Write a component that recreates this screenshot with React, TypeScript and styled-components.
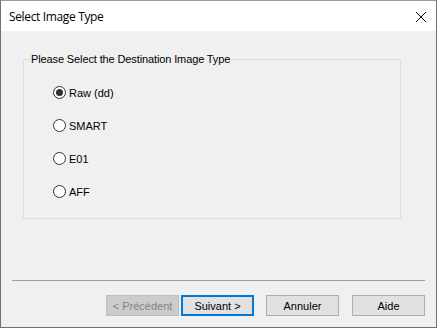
import React from "react";
import styled, { createGlobalStyle } from "styled-components";

const Global = createGlobalStyle`
  html, body { margin: 0; padding: 0; background: #f0f0f0; }
  * { box-sizing: border-box; }
`;

const Window = styled.div`
  width: 437px;
  height: 328px;
  border: 1px solid #6f6f6f;
  border-top-color: #9a9a9a;
  display: flex;
  flex-direction: column;
  background: #f0f0f0;
  font-family: "Liberation Sans", Arial, sans-serif;
  font-size: 11px;
  color: #000;
`;

const TitleBar = styled.div`
  height: 30px;
  background: #ffffff;
  display: flex;
  align-items: center;
  justify-content: space-between;
  padding: 0 9px 0 8px;
  flex-shrink: 0;
`;

const Title = styled.span`
  font-family: "Open Sans", "Noto Sans", sans-serif;
  font-size: 12px;
  color: #000;
  letter-spacing: -0.35px;
  padding-top: 1px;
`;

const CloseIcon = styled.svg`
  width: 12px;
  height: 12px;
  margin-top: 1px;
`;

const Body = styled.div`
  flex: 1;
  display: flex;
  flex-direction: column;
`;

const GroupBox = styled.div`
  position: relative;
  margin: 28px 0 0 22px;
  width: 378px;
  height: 160px;
  border: 1px solid #dcdcdc;
  padding: 16px 0 0 29px;
  display: flex;
  flex-direction: column;
`;

const Legend = styled.span`
  position: absolute;
  top: -8px;
  left: 6px;
  padding: 0 2px 0 1px;
  background: #f0f0f0;
  line-height: 14px;
  letter-spacing: -0.12px;
`;

const RadioRow = styled.label`
  height: 33px;
  display: flex;
  align-items: center;
  gap: 3px;
`;

const RadioCircle = styled.span<{ $checked?: boolean }>`
  width: 13px;
  height: 13px;
  border-radius: 50%;
  border: 1px solid #333333;
  background: #ffffff;
  display: flex;
  align-items: center;
  justify-content: center;
  &::after {
    content: "";
    width: 7px;
    height: 7px;
    border-radius: 50%;
    background: ${(p) => (p.$checked ? "#333333" : "transparent")};
  }
`;

const Separator = styled.div`
  margin: 61px 0 0 11px;
  width: 413px;
  height: 1px;
  background: #a0a0a0;
`;

const ButtonRow = styled.div`
  margin-top: 14px;
  display: flex;
  padding-left: 105px;
`;

const Button = styled.div<{ $variant?: "disabled" | "default" | "normal"; $gap?: number }>`
  width: 73px;
  height: 21px;
  margin-left: ${(p) => p.$gap ?? 0}px;
  display: flex;
  align-items: center;
  justify-content: center;
  background: ${(p) => (p.$variant === "disabled" ? "#cccccc" : "#e1e1e1")};
  border: ${(p) =>
    p.$variant === "default"
      ? "2px solid #0078d7"
      : p.$variant === "disabled"
      ? "1px solid #bfbfbf"
      : "1px solid #adadad"};
  color: ${(p) => (p.$variant === "disabled" ? "#838383" : "#000")};
`;

const options = [
  { label: "Raw (dd)", checked: true },
  { label: "SMART" },
  { label: "E01" },
  { label: "AFF" },
];

export default function App() {
  return (
    <>
      <Global />
      <Window>
        <TitleBar>
          <Title>Select Image Type</Title>
          <CloseIcon viewBox="0 0 12 12">
            <path d="M1 1 L11 11 M11 1 L1 11" stroke="#000" strokeWidth="1" fill="none" />
          </CloseIcon>
        </TitleBar>
        <Body>
          <GroupBox>
            <Legend>Please Select the Destination Image Type</Legend>
            {options.map((o) => (
              <RadioRow key={o.label}>
                <RadioCircle $checked={o.checked} />
                <span>{o.label}</span>
              </RadioRow>
            ))}
          </GroupBox>
          <Separator />
          <ButtonRow>
            <Button $variant="disabled">&lt; Précédent</Button>
            <Button $variant="default" $gap={2}>Suivant &gt;</Button>
            <Button $gap={12}>Annuler</Button>
            <Button $gap={13}>Aide</Button>
          </ButtonRow>
        </Body>
      </Window>
    </>
  );
}
